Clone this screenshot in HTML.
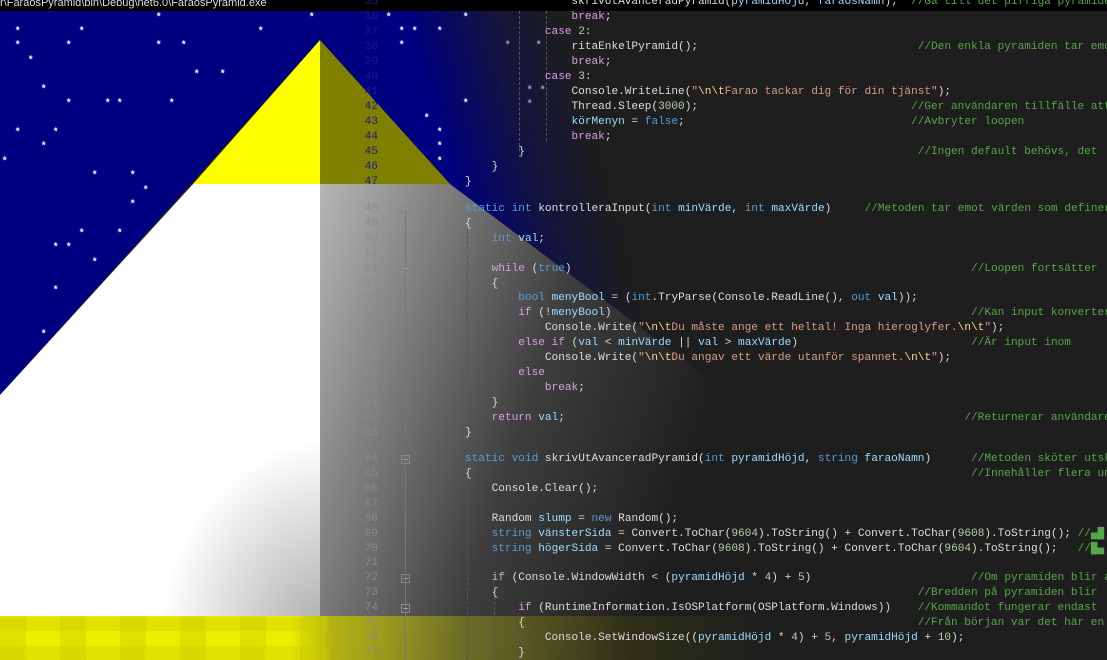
<!DOCTYPE html>
<html><head><meta charset="utf-8"><style>
*{margin:0;padding:0;box-sizing:border-box}
html,body{width:1107px;height:660px;overflow:hidden;background:#1e1e1e}
.L{position:absolute;left:0;top:0;width:1107px;height:660px;overflow:hidden}
#blue{background:#000080;clip-path:polygon(0 11px,1107px 11px,1107px 680px,790px 440px,450px 184px,320px 40px,0 395px);
 -webkit-mask-image:linear-gradient(75deg,#000 0,#000 560px,rgba(0,0,0,.35) 640px,transparent 710px);mask-image:linear-gradient(75deg,#000 0,#000 560px,rgba(0,0,0,.35) 640px,transparent 710px)}
#yel{background:#ffff00;clip-path:polygon(320px 40px,320px 184px,193px 184px)}
#olv{background:#808000;clip-path:polygon(320px 40px,450px 184px,320px 184px)}
#wht{background:radial-gradient(ellipse 170px 200px at 330px 640px,#a8a8a8 0,rgba(255,255,255,0) 100%),#fff;clip-path:polygon(193px 184px,320px 184px,320px 660px,0 660px,0 395px)}
#gry{background:linear-gradient(108deg,rgba(192,192,192,1) 27%,rgba(170,170,170,.75) 37%,rgba(120,120,120,.35) 50%,rgba(80,80,80,0) 64%);clip-path:polygon(320px 184px,450px 184px,790px 440px,1107px 680px,320px 660px)}
#band{top:616px;height:44px;background:linear-gradient(90deg,#eeee00 0,#eded00 290px,rgba(190,190,0,.85) 330px,rgba(150,150,20,.55) 460px,rgba(100,100,0,.25) 620px,rgba(60,60,0,0) 760px)}
#band:before{content:"";position:absolute;left:0;top:0;width:330px;height:44px;background:repeating-linear-gradient(90deg,rgba(200,200,0,.35) 0 26px,transparent 26px 60px),repeating-linear-gradient(0deg,rgba(200,200,0,.3) 0 14px,transparent 14px 29px)}
#title{height:11px;background:#000;overflow:hidden;font:11px "Liberation Sans",sans-serif;color:#ddd;line-height:6px;white-space:pre}
.st{position:absolute;color:#fff;font:bold 9px "Liberation Mono",monospace;text-shadow:0 0 2px #88f;line-height:9px}
.code{position:absolute;left:465px;font:11.1px "Liberation Mono","DejaVu Sans Mono",monospace;color:#dcdcdc;white-space:pre;line-height:14px}
.ln{position:absolute;left:340px;width:38px;text-align:right;font:11.1px "Liberation Mono",monospace;color:#8a8a8a;line-height:14px}
.t .ln{color:#1a1a8a}
.k{color:#569cd6}.c{color:#d8a0df}.p{color:#9cdcfe}.s{color:#d69d85}.e{color:#ffd68f}.m{color:#57a64a}.n{color:#b5cea8}
.fold{position:absolute;left:401px;width:9px;height:9px;border:1px solid #888;}
.fold:after{content:"";position:absolute;left:1px;top:3px;width:5px;height:1px;background:#999}
.vl{position:absolute;left:405px;width:1px;background:#777}
.ig{position:absolute;width:0;border-left:1px dashed #555}
</style></head><body>
<div class="L" id="blue"></div>
<div class="L" id="yel"></div>
<div class="L" id="olv"></div>
<div class="L" id="wht"></div>
<div class="L" id="gry"></div>
<div class="L" id="band"></div>
<div class="L" id="title">r\FaraosPyramid\bin\Debug\net6.0\FaraosPyramid.exe</div>
<div class="L" id="stars">
<span class="st" style="left:156px;top:13px">*</span><span class="st" style="left:309px;top:13px">*</span><span class="st" style="left:386px;top:13px">*</span><span class="st" style="left:463px;top:13px">*</span>
<span class="st" style="left:15px;top:27px">*</span><span class="st" style="left:79px;top:27px">*</span><span class="st" style="left:258px;top:27px">*</span><span class="st" style="left:399px;top:27px">*</span><span class="st" style="left:412px;top:27px">*</span><span class="st" style="left:437px;top:27px">*</span>
<span class="st" style="left:15px;top:41px">*</span><span class="st" style="left:66px;top:41px">*</span><span class="st" style="left:156px;top:41px">*</span><span class="st" style="left:181px;top:41px">*</span><span class="st" style="left:399px;top:41px">*</span>
<span class="st" style="left:28px;top:56px">*</span><span class="st" style="left:194px;top:70px">*</span><span class="st" style="left:220px;top:70px">*</span><span class="st" style="left:41px;top:85px">*</span>
<span class="st" style="left:66px;top:99px">*</span><span class="st" style="left:105px;top:99px">*</span><span class="st" style="left:117px;top:99px">*</span><span class="st" style="left:169px;top:99px">*</span><span class="st" style="left:463px;top:99px">*</span>
<span class="st" style="left:424px;top:114px">*</span><span class="st" style="left:15px;top:128px">*</span><span class="st" style="left:53px;top:128px">*</span><span class="st" style="left:437px;top:128px">*</span>
<span class="st" style="left:41px;top:142px">*</span><span class="st" style="left:437px;top:142px">*</span><span class="st" style="left:2px;top:157px">*</span><span class="st" style="left:437px;top:157px">*</span>
<span class="st" style="left:92px;top:171px">*</span><span class="st" style="left:130px;top:171px">*</span><span class="st" style="left:143px;top:186px">*</span><span class="st" style="left:130px;top:200px">*</span>
<span class="st" style="left:79px;top:229px">*</span><span class="st" style="left:117px;top:229px">*</span><span class="st" style="left:53px;top:243px">*</span><span class="st" style="left:66px;top:243px">*</span><span class="st" style="left:92px;top:258px">*</span><span class="st" style="left:53px;top:286px">*</span><span class="st" style="left:41px;top:330px">*</span>
<span class="st" style="left:536px;top:41px;opacity:.6">*</span><span class="st" style="left:527px;top:86px;opacity:.6">*</span><span class="st" style="left:540px;top:86px;opacity:.6">*</span><span class="st" style="left:527px;top:100px;opacity:.6">*</span><span class="st" style="left:505px;top:41px;opacity:.6">*</span>
</div>
<div class="L t">
<div class="vl" style="top:205px;height:232px"></div><div class="vl" style="top:455px;height:205px"></div>
<div class="ig" style="left:519px;top:11px;height:140px"></div><div class="ig" style="left:546px;top:11px;height:130px"></div>
<div class="ig" style="left:467px;top:226px;height:200px"></div><div class="ig" style="left:494px;top:285px;height:115px"></div>
<div class="ig" style="left:467px;top:477px;height:183px"></div><div class="ig" style="left:494px;top:597px;height:63px"></div><div class="ig" style="left:521px;top:627px;height:33px"></div>
<div class="fold" style="top:205px"></div><div class="fold" style="top:264px"></div><div class="fold" style="top:455px"></div><div class="fold" style="top:574px"></div><div class="fold" style="top:604px"></div>
<div class="ln" style="top:-5px">35</div><div class="ln" style="top:10px">36</div><div class="ln" style="top:25px">37</div><div class="ln" style="top:40px">38</div><div class="ln" style="top:55px">39</div><div class="ln" style="top:70px">40</div><div class="ln" style="top:85px">41</div><div class="ln" style="top:100px">42</div><div class="ln" style="top:115px">43</div><div class="ln" style="top:130px">44</div><div class="ln" style="top:145px">45</div><div class="ln" style="top:160px">46</div><div class="ln" style="top:175px">47</div>
</div>
<div class="L">
<div class="ln" style="top:202px">48</div><div class="ln" style="top:217px">49</div><div class="ln" style="top:232px">50</div><div class="ln" style="top:247px">51</div><div class="ln" style="top:262px">52</div><div class="ln" style="top:277px">53</div><div class="ln" style="top:291px">54</div><div class="ln" style="top:306px">55</div><div class="ln" style="top:321px">56</div><div class="ln" style="top:336px">57</div><div class="ln" style="top:351px">58</div><div class="ln" style="top:366px">59</div><div class="ln" style="top:381px">60</div><div class="ln" style="top:396px">61</div><div class="ln" style="top:411px">62</div><div class="ln" style="top:426px">63</div>
<div class="ln" style="top:452px">64</div><div class="ln" style="top:467px">65</div><div class="ln" style="top:482px">66</div><div class="ln" style="top:497px">67</div><div class="ln" style="top:512px">68</div><div class="ln" style="top:527px">69</div><div class="ln" style="top:542px">70</div><div class="ln" style="top:556px">71</div><div class="ln" style="top:571px">72</div><div class="ln" style="top:586px">73</div><div class="ln" style="top:601px">74</div><div class="ln" style="top:616px">75</div><div class="ln" style="top:631px">76</div><div class="ln" style="top:646px">77</div>

<div class="code" style="top:-5px">                skrivUtAvanceradPyramid(<span class="p">pyramidHöjd</span>, <span class="p">faraosNamn</span>);  <span class="m">//Gå till det piffiga pyramiden</span></div>
<div class="code" style="top:10px">                <span class="c">break</span>;</div>
<div class="code" style="top:25px">            <span class="c">case</span> <span class="n">2</span>:</div>
<div class="code" style="top:40px">                ritaEnkelPyramid();                                 <span class="m">//Den enkla pyramiden tar emot</span></div>
<div class="code" style="top:55px">                <span class="c">break</span>;</div>
<div class="code" style="top:70px">            <span class="c">case</span> <span class="n">3</span>:</div>
<div class="code" style="top:85px">                Console.WriteLine(<span class="s">"</span><span class="e">\n\t</span><span class="s">Farao tackar dig för din tjänst"</span>);</div>
<div class="code" style="top:100px">                Thread.Sleep(<span class="n">3000</span>);                                <span class="m">//Ger användaren tillfälle att</span></div>
<div class="code" style="top:115px">                <span class="p">körMenyn</span> = <span class="k">false</span>;                                  <span class="m">//Avbryter loopen</span></div>
<div class="code" style="top:130px">                <span class="c">break</span>;</div>
<div class="code" style="top:145px">        }                                                           <span class="m">//Ingen default behövs, det</span></div>
<div class="code" style="top:160px">    }</div>
<div class="code" style="top:175px">}</div>

<div class="code" style="top:202px"><span class="k">static</span> <span class="k">int</span> kontrolleraInput(<span class="k">int</span> <span class="p">minVärde</span>, <span class="k">int</span> <span class="p">maxVärde</span>)     <span class="m">//Metoden tar emot värden som definerar</span></div>
<div class="code" style="top:217px">{</div>
<div class="code" style="top:232px">    <span class="k">int</span> <span class="p">val</span>;</div>
<div class="code" style="top:262px">    <span class="c">while</span> (<span class="k">true</span>)                                                            <span class="m">//Loopen fortsätter</span></div>
<div class="code" style="top:277px">    {</div>
<div class="code" style="top:291px">        <span class="k">bool</span> <span class="p">menyBool</span> = (<span class="k">int</span>.TryParse(Console.ReadLine(), <span class="k">out</span> <span class="p">val</span>));</div>
<div class="code" style="top:306px">        <span class="c">if</span> (!<span class="p">menyBool</span>)                                                      <span class="m">//Kan input konverteras</span></div>
<div class="code" style="top:321px">            Console.Write(<span class="s">"</span><span class="e">\n\t</span><span class="s">Du måste ange ett heltal! Inga hieroglyfer.</span><span class="e">\n\t</span><span class="s">"</span>);</div>
<div class="code" style="top:336px">        <span class="c">else if</span> (<span class="p">val</span> &lt; <span class="p">minVärde</span> || <span class="p">val</span> &gt; <span class="p">maxVärde</span>)                          <span class="m">//Är input inom</span></div>
<div class="code" style="top:351px">            Console.Write(<span class="s">"</span><span class="e">\n\t</span><span class="s">Du angav ett värde utanför spannet.</span><span class="e">\n\t</span><span class="s">"</span>);</div>
<div class="code" style="top:366px">        <span class="c">else</span></div>
<div class="code" style="top:381px">            <span class="c">break</span>;</div>
<div class="code" style="top:396px">    }</div>
<div class="code" style="top:411px">    <span class="c">return</span> <span class="p">val</span>;                                                            <span class="m">//Returnerar användarens</span></div>
<div class="code" style="top:426px">}</div>

<div class="code" style="top:452px"><span class="k">static</span> <span class="k">void</span> skrivUtAvanceradPyramid(<span class="k">int</span> <span class="p">pyramidHöjd</span>, <span class="k">string</span> <span class="p">faraoNamn</span>)      <span class="m">//Metoden sköter utskriften</span></div>
<div class="code" style="top:467px">{                                                                           <span class="m">//Innehåller flera undermetoder</span></div>
<div class="code" style="top:482px">    Console.Clear();</div>
<div class="code" style="top:512px">    Random <span class="p">slump</span> = <span class="k">new</span> Random();</div>
<div class="code" style="top:527px">    <span class="k">string</span> <span class="p">vänsterSida</span> = Convert.ToChar(<span class="n">9604</span>).ToString() + Convert.ToChar(<span class="n">9608</span>).ToString(); <span class="m">//▄█</span></div>
<div class="code" style="top:542px">    <span class="k">string</span> <span class="p">högerSida</span> = Convert.ToChar(<span class="n">9608</span>).ToString() + Convert.ToChar(<span class="n">9604</span>).ToString();   <span class="m">//█▄</span></div>
<div class="code" style="top:571px">    <span class="c">if</span> (Console.WindowWidth &lt; (<span class="p">pyramidHöjd</span> * <span class="n">4</span>) + <span class="n">5</span>)                        <span class="m">//Om pyramiden blir av den storleken</span></div>
<div class="code" style="top:586px">    {                                                               <span class="m">//Bredden på pyramiden blir</span></div>
<div class="code" style="top:601px">        <span class="c">if</span> (RuntimeInformation.IsOSPlatform(OSPlatform.Windows))    <span class="m">//Kommandot fungerar endast</span></div>
<div class="code" style="top:616px">        {                                                           <span class="m">//Från början var det här en</span></div>
<div class="code" style="top:631px">            Console.SetWindowSize((<span class="p">pyramidHöjd</span> * <span class="n">4</span>) + <span class="n">5</span>, <span class="p">pyramidHöjd</span> + <span class="n">10</span>);</div>
<div class="code" style="top:646px">        }</div>
</div>
</body></html>
